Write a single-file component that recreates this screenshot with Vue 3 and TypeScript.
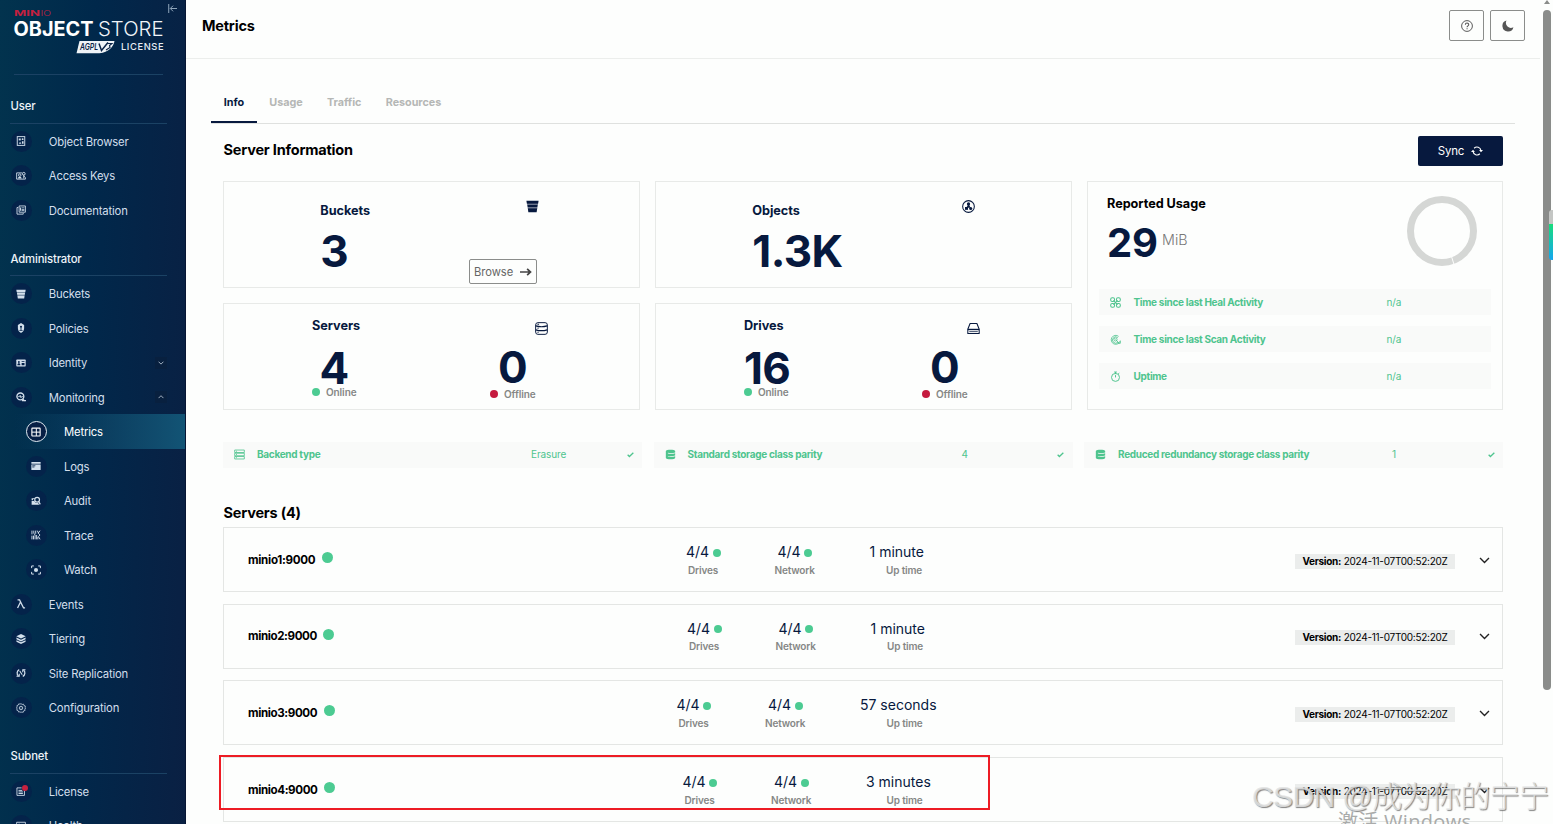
<script setup lang="ts">
interface NavItem {
  label: string
  icon: string
  sub?: boolean
  active?: boolean
  chevron?: 'up' | 'down'
  badge?: boolean
}
interface NavGroup {
  title: string
  items: NavItem[]
}

const groups: NavGroup[] = [
  {
    title: 'User',
    items: [
      { label: 'Object Browser', icon: 'browser' },
      { label: 'Access Keys', icon: 'keys' },
      { label: 'Documentation', icon: 'docs' },
    ],
  },
  {
    title: 'Administrator',
    items: [
      { label: 'Buckets', icon: 'bucket' },
      { label: 'Policies', icon: 'policy' },
      { label: 'Identity', icon: 'identity', chevron: 'down' },
      { label: 'Monitoring', icon: 'monitor', chevron: 'up' },
      { label: 'Metrics', icon: 'metrics', sub: true, active: true },
      { label: 'Logs', icon: 'logs', sub: true },
      { label: 'Audit', icon: 'audit', sub: true },
      { label: 'Trace', icon: 'trace', sub: true },
      { label: 'Watch', icon: 'watch', sub: true },
      { label: 'Events', icon: 'lambda' },
      { label: 'Tiering', icon: 'tiers' },
      { label: 'Site Replication', icon: 'replication' },
      { label: 'Configuration', icon: 'gear' },
    ],
  },
  {
    title: 'Subnet',
    items: [
      { label: 'License', icon: 'license', badge: true },
      { label: 'Health', icon: 'health' },
    ],
  },
]

const s = 'fill="none" stroke="currentColor"'
const icons: Record<string, string> = {
  browser: `<rect x="2" y="1" width="12" height="14" ${s} stroke-width="1.5"/><rect x="4.4" y="4" width="3.2" height="3"/><circle cx="10.6" cy="5" r="1.5"/><path d="M4.5 12.5l2-3.5 2 3.5zM9.5 8.5h2.6v4H9.5z"/>`,
  keys: `<path d="M9.5 3H1v10h14v-3" ${s} stroke-width="1.4"/><circle cx="6" cy="6.6" r="2" ${s} stroke-width="1.4"/><path d="M3 12c0-4 6-4 6 0z"/><circle cx="12.4" cy="4.4" r="2.2" ${s} stroke-width="1.5"/><path d="M12.4 6v6M12.4 9h2" ${s} stroke-width="1.4"/>`,
  docs: `<path d="M5 1.500h10v10H5z" ${s} stroke-width="1.4"/><path d="M3.500 4H1.600v10.600h10V13" ${s} stroke-width="1.4"/><path d="M6.500 4h1.600v5H6.500zM9 4h4.400v1.300H9zM9 6.200h4.400v1.300H9zM9 8.400h4.400v1.300H9z"/>`,
  bucket: `<path d="M.5 1h15l-.6 3.600H1.100zM1.500 5.800h13l-.5 3.200h-12zM2.200 10.200h11.600L13.100 15H2.900z"/><path d="M1.300 4h13.400v2.200H1.500zM2 8.500h12v2H2.200z" opacity=".45"/>`,
  policy: `<path d="M8 0l5 3v3.500c0 4-.2 7-5 9.500-4.800-2.500-5-5.500-5-9.500V3z"/><circle cx="8" cy="6" r="1.700" fill="#03204a"/><path d="M7.300 7h1.400v4.500H7.300zM5.500 11h5v1.200h-5z" fill="#03204a"/>`,
  identity: `<rect x=".5" y="2.500" width="15" height="11" rx="1"/><circle cx="4.600" cy="6.300" r="1.500" fill="#03204a"/><path d="M2.200 11.500c0-4 4.800-4 4.800 0zM9 5h4.600v1.500H9zM9 8h4.600v3.500H9z" fill="#03204a"/>`,
  monitor: `<circle cx="7" cy="7" r="5.500" ${s} stroke-width="2.200"/><path d="M3.500 7.400h2l1.200-2 1.300 3.800 1-1.800h2" ${s} stroke-width="1.500"/><path d="M10.500 11l3.600 3.600M9.500 13.800h6.500" ${s} stroke-width="2.200"/>`,
  metrics: `<rect x="1.400" y="1.800" width="13.200" height="12.600" rx=".8" ${s} stroke-width="1.800"/><path d="M8.500 2v12.300M1.400 8.200h13.200" ${s} stroke-width="1.600"/>`,
  logs: `<path d="M.6 1.500h14.800v3H.6zM.6 5.600h14.800v8.900H.6z"/><path d="M2 7.600h5M2 9.600h3.500" stroke="#03204a" stroke-width="1.200"/>`,
  audit: `<path d="M1 3.500h5v1.300H3.400v2H1zM1 8h4.200l2.500 3.200h3.800L13 14H1z"/><circle cx="9.800" cy="6" r="3.800" ${s} stroke-width="1.900"/><path d="M12.400 8.800l2.400 4.600" ${s} stroke-width="2"/>`,
  trace: `<path d="M1.500 1v6M1.500 9v6M4.500 1v4l2 3v7M4 9v6M7.500 1v5M9 8v7M10 1l2 4M14.500 1l-3 4 3 3-2.500 2.500 2.500 4.500M11 11v4" ${s} stroke-width="1.500"/>`,
  watch: `<path d="M1 5V1.500h3.500M11.500 1.500H15V5M15 11v3.500h-3.500M4.500 14.500H1V11" ${s} stroke-width="1.600"/><circle cx="8" cy="8" r="3.300"/>`,
  lambda: `<path d="M2.500 1.500h3.200L12 14h2.500M7 5.200L2.500 14.500" ${s} stroke-width="2"/>`,
  tiers: `<path d="M8 0l7.500 3.600L8 7.200.5 3.600z"/><path d="M.7 5.600L8 9.100l7.300-3.500v2.900L8 12 .7 8.500z"/><path d="M.7 9.800L8 13.300l7.300-3.500v2.600L8 15.900.7 12.400z"/>`,
  replication: `<path d="M5.200 2.600A6.300 6.300 0 0 0 4 13M10.800 13.400A6.300 6.300 0 0 0 12 3" ${s} stroke-width="2"/><path d="M.8 13.300h4.400V9.300M15.200 2.700h-4.400v4M6 4.800l4 6" ${s} stroke-width="1.700"/>`,
  gear: `<path d="M8 .9l1.700 1.500 2.300-.5.700 2.200 2.300.8-.5 2.200L15.500 8 14 9.700l.5 2.200-2.300.7-.7 2.300-2.200-.5L8 15.300l-1.600-1.300-2.200.5-.7-2.200-2.200-.8.500-2.200L.6 8l1.300-1.600-.5-2.200 2.200-.8.800-2.100 2.100.5z" ${s} stroke-width="1.200"/><circle cx="8" cy="8" r="2.800" ${s} stroke-width="1.300"/><circle cx="8" cy="8" r=".8"/>`,
  license: `<path d="M9 3H1.500v12h12V7.500" ${s} stroke-width="1.4"/><path d="M4 7h6M4 9.500h7M4 12h7" ${s} stroke-width="1.5"/>`,
  health: `<path d="M1 2h14v13H1z" ${s} stroke-width="1.4"/><path d="M4 5h2v2H4zM8 5.500h5M4 9h2v2H4zM8 10h5" ${s} stroke-width="1.2"/>`,
  objects: `<circle cx="8" cy="8" r="7.200" ${s} stroke-width="1.300"/><circle cx="8" cy="4.800" r="2"/><path d="M8 4.500l2.600 5H5.400z"/><rect x="3.700" y="8.600" width="3.700" height="3.500"/><circle cx="10.700" cy="10.400" r="1.900"/>`,
  server: `<rect x=".8" y=".8" width="14.400" height="14.400" rx="2.800" ${s} stroke-width="1.200"/><path d="M1 4.800c4 1.200 10 1.200 14 0M1 9.600c4 1.300 10 1.300 14 0" ${s} stroke-width="1.500"/><path d="M3 2.800h2M3 7.600h1.500M3 12.600h1.500" ${s} stroke-width="1.200"/>`,
  drive: `<path d="M3.800 1.800h8.400L15 9v5.200H1V9z" ${s} stroke-width="1.300" stroke-linejoin="round"/><path d="M1 9.200h14" ${s} stroke-width="1.700"/><path d="M2.800 11.800h10.500" ${s} stroke-width=".9"/>`,
  heal: `<g ${s} stroke-width="1.500"><rect x="1" y="1" width="5.600" height="5.600" rx="2.200"/><rect x="9.400" y="1" width="5.600" height="5.600" rx="2.200"/><rect x="1" y="9.400" width="5.600" height="5.600" rx="2.200"/><rect x="9.400" y="9.400" width="5.600" height="5.600" rx="2.200"/><path d="M5 5l6 6M11 5l-6 6"/></g>`,
  scan: `<g ${s} stroke-width="1.200"><path d="M14.500 10.500A6.500 6.500 0 1 1 12.500 3.500M11.500 12A4.600 4.600 0 1 1 11.300 5.300"/><circle cx="8" cy="8" r="2.300"/><path d="M8 8l5.500 5.500M15 9.500v4h-4"/></g>`,
  clock: `<circle cx="8" cy="9.300" r="5.800" ${s} stroke-width="1.400"/><path d="M6 1.500h4M8 1.500v3M12 4l1.500-1M8 9.300V6" ${s} stroke-width="1.400"/>`,
  backend: `<path d="M1 1.500h14v3.600H1zM1 6.200h14v3.600H1zM1 10.900h14v3.600H1z" ${s} stroke-width="1.200"/><path d="M3 3.300h1.400M3 8h1.400M3 12.700h1.400" stroke="currentColor" stroke-width="1.200"/>`,
  storage: `<path d="M1.200 3C1.200.4 14.800.4 14.800 3v2.200c-3 1.200-8 1.200-10.600.4v1c3 .8 7.700.6 10.600-.3v3.300c-3 1.200-8 1.200-10.600.4v1c3 .8 7.700.6 10.600-.3V13c0 2.600-13.600 2.600-13.600 0z"/>`,
  help: `<circle cx="8" cy="8" r="7.200" ${s} stroke-width="1.300"/><path d="M5.800 6.400c0-3 4.500-3 4.500-.2 0 1.700-2.200 1.700-2.200 3.500M8.100 10.900v1.500" ${s} stroke-width="1.400"/>`,
  moon: `<path d="M6 .8a6.600 6.600 0 0 0 9.200 8.700A7.400 7.400 0 1 1 6 .8z"/>`,
  sync: `<path d="M4.200 4.300a5.400 5.400 0 0 1 9.100 3.200M11.800 11.700a5.400 5.400 0 0 1-9.100-3.200" ${s} stroke-width="1.500"/><path d="M0 9.200h5.200L2.700 6.200zM16 6.800h-5.200l2.500 3z"/>`,
  arrow: `<path d="M0 8h14M9.500 3.800L14 8l-4.500 4.200" ${s} stroke-width="2.300"/>`,
  check: `<path d="M1.500 8.500l4 4L14.500 4" ${s} stroke-width="3"/>`,
  down: `<path d="M1.500 4.500L8 11l6.500-6.500" ${s} stroke-width="2"/>`,
  up: `<path d="M1.500 11L8 4.500l6.500 6.500" ${s} stroke-width="2"/>`,
  collapse: `<path d="M1.300 0v16M16 8H4.500M9 3L4 8l5 5" ${s} stroke-width="1.600"/>`,
}

const tabs = ['Info', 'Usage', 'Traffic', 'Resources']
const activity = [
  { label: 'Time since last Heal Activity', icon: 'heal', value: 'n/a' },
  { label: 'Time since last Scan Activity', icon: 'scan', value: 'n/a' },
  { label: 'Uptime', icon: 'clock', value: 'n/a' },
]
const backend = [
  { label: 'Backend type', icon: 'backend', value: 'Erasure' },
  { label: 'Standard storage class parity', icon: 'storage', value: '4' },
  { label: 'Reduced redundancy storage class parity', icon: 'storage', value: '1' },
]
const hosts = [
  { title: 'Servers', icon: 'server', online: '4', offline: '0' },
  { title: 'Drives', icon: 'drive', online: '16', offline: '0' },
]
const servers = [
  { name: 'minio1:9000', up: '1 minute' },
  { name: 'minio2:9000', up: '1 minute' },
  { name: 'minio3:9000', up: '57 seconds' },
  { name: 'minio4:9000', up: '3 minutes' },
]
</script>

<template>
  <div class="app">
    <aside class="sidebar">
      <div class="brand">
        <svg width="186" height="60" viewBox="0 0 186 60">
          <text x="14" y="15.800" class="minio" textLength="26" lengthAdjust="spacingAndGlyphs">MIN</text>
          <text x="40.500" y="15.800" class="minio thin" textLength="10.500" lengthAdjust="spacingAndGlyphs">IO</text>
          <text x="13.500" y="36" class="object" textLength="80" lengthAdjust="spacingAndGlyphs">OBJECT</text>
          <text x="98" y="36" class="store" textLength="65.500" lengthAdjust="spacingAndGlyphs">STORE</text>
          <path d="M79.500 41h35c-1 6-6 11.500-15 12.200H76.500z" fill="#eef3f7" />
          <text x="80" y="50" class="agpl" textLength="18" lengthAdjust="spacingAndGlyphs">AGPL</text>
          <path d="M99 43.500l2.500 7 6.500-8" fill="none" stroke="#0a2448" stroke-width="1.500" />
          <path d="M107 43.500h5l-2.500 2 .5 2-4 2.500" fill="none" stroke="#0a2448" stroke-width="1.100" />
          <text x="121" y="50.200" class="license" textLength="42.500">LICENSE</text>
        </svg>
        <svg class="collapse" viewBox="0 0 16 16" v-html="icons.collapse"></svg>
      </div>
      <div class="brand-rule"></div>
      <section v-for="g in groups" :key="g.title" class="group">
        <div class="group-title">{{ g.title }}</div>
        <div v-for="n in g.items" :key="n.label" class="nav" :class="{ sub: n.sub, active: n.active }">
          <span class="bubble">
            <svg viewBox="0 0 16 16" v-html="icons[n.icon]"></svg>
            <i v-if="n.badge" class="badge"></i>
          </span>
          <span class="nav-label">{{ n.label }}</span>
          <span v-if="n.chevron" class="chev"><svg viewBox="0 0 16 16" v-html="icons[n.chevron]"></svg></span>
        </div>
      </section>
    </aside>

    <main class="main">
      <header class="topbar">
        <h1>Metrics</h1>
        <div class="tools">
          <button class="tool"><svg viewBox="0 0 16 16" v-html="icons.help"></svg></button>
          <button class="tool"><svg viewBox="0 0 16 16" v-html="icons.moon"></svg></button>
        </div>
      </header>

      <nav class="tabs">
        <span v-for="(t, i) in tabs" :key="t" class="tab" :class="{ on: i === 0 }">{{ t }}</span>
      </nav>

      <div class="content">
        <div class="heading">
          <h2>Server Information</h2>
          <button class="sync">Sync<svg viewBox="0 0 16 16" v-html="icons.sync"></svg></button>
        </div>

        <div class="grid">
          <div class="card count">
            <div class="left">
              <div class="title">Buckets</div>
              <div class="big">3</div>
            </div>
            <div class="right">
              <svg class="ico" viewBox="0 0 16 16" v-html="icons.bucket"></svg>
              <button class="browse">Browse<svg viewBox="0 0 16 16" v-html="icons.arrow"></svg></button>
            </div>
          </div>
          <div class="card count">
            <div class="left">
              <div class="title">Objects</div>
              <div class="big">1.3K</div>
            </div>
            <div class="right wide">
              <svg class="ico" viewBox="0 0 16 16" v-html="icons.objects"></svg>
            </div>
          </div>

          <div class="card usage">
            <div class="usage-top">
              <div>
                <div class="title black">Reported Usage</div>
                <div class="amount"><span class="num">29</span><span class="unit">MiB</span></div>
              </div>
              <svg class="ring" viewBox="0 0 70 70">
                <circle cx="35" cy="35" r="31.500" fill="none" stroke="#d5d7d5" stroke-width="7" />
                <path d="M44.500 60.500l2.500 8" stroke="#fdfefd" stroke-width="1" />
              </svg>
            </div>
            <div v-for="a in activity" :key="a.label" class="strip act">
              <svg viewBox="0 0 16 16" v-html="icons[a.icon]"></svg>
              <b>{{ a.label }}</b>
              <span>{{ a.value }}</span>
            </div>
          </div>

          <div v-for="h in hosts" :key="h.title" class="card host">
            <div class="left">
              <div class="title">{{ h.title }}</div>
              <div class="big" :class="{ inset: h.online.length === 1 }">{{ h.online }}</div>
              <div class="state"><i class="dot green"></i>Online</div>
            </div>
            <div class="right">
              <svg class="ico" viewBox="0 0 16 16" v-html="icons[h.icon]"></svg>
              <div class="big">{{ h.offline }}</div>
              <div class="state"><i class="dot red"></i>Offline</div>
            </div>
          </div>
        </div>

        <div class="backend">
          <div v-for="b in backend" :key="b.label" class="strip">
            <svg viewBox="0 0 16 16" v-html="icons[b.icon]"></svg>
            <b>{{ b.label }}</b>
            <span>{{ b.value }}</span>
            <svg class="tick" viewBox="0 0 16 16" v-html="icons.check"></svg>
          </div>
        </div>

        <h2 class="list-title">Servers (4)</h2>
        <div v-for="(v, i) in servers" :key="v.name" class="server" :class="'r' + i">
          <div class="name">{{ v.name }}<i class="dot green"></i></div>
          <div class="stat drives">
            <div class="line">4/4<i class="dot green"></i></div>
            <small>Drives</small>
          </div>
          <div class="stat network">
            <div class="line">4/4<i class="dot green"></i></div>
            <small>Network</small>
          </div>
          <div class="stat uptime">
            <div class="line">{{ v.up }}</div>
            <small>Up time</small>
          </div>
          <div class="tail">
            <div class="version"><b>Version:</b> 2024-11-07T00:52:20Z</div>
            <svg viewBox="0 0 16 16" v-html="icons.down"></svg>
          </div>
        </div>
      </div>
    </main>

    <div class="scroll">
      <div class="cap"></div>
      <div class="thumb"></div>
    </div>
    <div class="side-tab"></div>
    <div class="marker"></div>
    <div class="activate">激活 Windows</div>
    <div class="watermark">CSDN @成为你的宁宁</div>
  </div>
</template>

<style>
body {
  margin: 0;
  overflow: hidden;
}
</style>

<style scoped>
.app {
  position: relative;
  display: flex;
  width: 1553px;
  height: 824px;
  overflow: hidden;
  background: #fdfefd;
  font-family: Inter, "Liberation Sans", "Noto Sans CJK SC", sans-serif;
  color: #000;
}
.app * {
  box-sizing: border-box;
}
svg {
  display: block;
  flex: none;
  fill: currentColor;
}
h1,
h2 {
  margin: 0;
  font-weight: 700;
  letter-spacing: -0.200px;
}
button {
  font: inherit;
  padding: 0;
  background: none;
  display: flex;
  align-items: center;
}

/* sidebar */
.sidebar {
  flex: none;
  width: 186px;
  height: 824px;
  overflow: hidden;
  background: linear-gradient(92deg, #02334e 0%, #00284b 45%, #0a2043 100%);
  border-right: 1px solid #071634;
  color: #d3dfec;
}
.brand {
  position: relative;
  height: 73.700px;
}
.minio {
  font-size: 7.500px;
  font-weight: 700;
  fill: #c4203f;
}
.minio.thin {
  font-weight: 300;
}
.object {
  font-size: 19.500px;
  font-weight: 700;
  fill: #fff;
}
.store {
  font-size: 19.500px;
  font-weight: 300;
  fill: #f1f5f9;
}
.agpl {
  font-size: 9px;
  font-weight: 600;
  font-style: italic;
  fill: #0a2448;
}
.license {
  font-size: 9.300px;
  font-weight: 500;
  fill: #e6edf4;
}
.collapse {
  position: absolute;
  left: 168px;
  top: 4px;
  width: 9px;
  height: 9px;
  color: #9fb4c8;
}
.brand-rule {
  height: 1px;
  margin: 0 22px 0 14px;
  background: #1b4264;
}
.group-title {
  height: 49.100px;
  margin: 0 18px 0 10px;
  padding: 23.600px 0 0 0.500px;
  border-bottom: 1px solid #1b4264;
  font-size: 11.300px;
  letter-spacing: -0.150px;
  line-height: 17px;
  font-weight: 500;
  color: #eef4f9;
}
.nav {
  display: flex;
  align-items: center;
  height: 34.500px;
  padding-left: 10.500px;
  font-size: 11.300px;
  letter-spacing: -0.180px;
}
.nav-label {
  margin-top: 1px;
}
.nav.sub {
  padding-left: 25.700px;
}
.bubble {
  position: relative;
  width: 21px;
  height: 21px;
  margin-right: 17.300px;
  border-radius: 50%;
  background: #04234a;
  display: flex;
  align-items: center;
  justify-content: center;
}
.bubble svg {
  width: 10px;
  height: 10px;
}
.nav.active {
  background: linear-gradient(90deg, rgba(22, 98, 130, 0) 8%, #125475 100%);
  color: #fff;
}
.active .bubble {
  border: 1px solid #e4edf4;
  background: #071f45;
}
.badge {
  position: absolute;
  left: 11.500px;
  top: 4px;
  width: 6px;
  height: 6px;
  border-radius: 50%;
  background: #c7213f;
}
.chev {
  margin-left: auto;
  margin-right: 18px;
  width: 12px;
  height: 12px;
  background: #08203f;
  display: flex;
  align-items: center;
  justify-content: center;
}
.chev svg {
  width: 6px;
  height: 6px;
}

/* main area */
.main {
  width: 1354px;
  flex: none;
}
.topbar {
  height: 59px;
  border-bottom: 1px solid #eceeec;
  padding: 10px 15px 0 16px;
  display: flex;
  justify-content: space-between;
}
h1 {
  font-size: 14.500px;
  line-height: 32px;
}
.tools {
  display: flex;
  gap: 6px;
}
.tool {
  width: 35px;
  height: 31px;
  border: 1px solid #8b8d8b;
  border-radius: 2px;
  justify-content: center;
  color: #555;
}
.tool svg {
  width: 12px;
  height: 12px;
}
.tabs {
  display: flex;
  height: 42px;
  margin: 23px 25px 0;
  border-bottom: 1px solid #dfe1df;
  font-size: 10.800px;
  letter-spacing: -0.050px;
  font-weight: 700;
  color: #b5b7b5;
}
.tab {
  height: 41px;
  line-height: 41px;
  padding: 0 11.700px 0 12.800px;
}
.tab.on {
  padding-right: 12.500px;
  color: #07193e;
  border-bottom: 2px solid #07193e;
}
.content {
  padding: 12px 37px 0;
}
.heading {
  display: flex;
  justify-content: space-between;
  height: 45px;
}
h2 {
  font-size: 14.500px;
  line-height: 28px;
}
.heading h2 {
  padding-left: 0.500px;
}
.sync {
  width: 85px;
  height: 30px;
  justify-content: center;
  gap: 7px;
  border: 0;
  border-radius: 2px;
  background: #07193e;
  color: #fff;
  font-size: 11.500px;
  letter-spacing: -0.200px;
}
.sync svg {
  width: 12px;
  height: 12px;
}
.grid {
  display: grid;
  grid-template-columns: 417px 417px 416px;
  grid-template-rows: 107px 107px;
  gap: 15px;
}
.card {
  display: flex;
  border: 1px solid #e8eae8;
  color: #07193e;
}
.title {
  font-size: 12.700px;
  line-height: 16px;
  font-weight: 700;
  letter-spacing: -0.050px;
}
.black {
  color: #000;
}
.big {
  font-size: 44px;
  font-weight: 700;
  letter-spacing: -0.600px;
}
.count {
  padding-left: 96.300px;
}
.count .left {
  width: 148.700px;
  padding-top: 21px;
}
.count .big {
  margin-top: 10px;
  line-height: 44px;
}
.count .right {
  display: flex;
  flex-direction: column;
  width: 70px;
  padding-top: 18px;
}
.count .right.wide {
  width: 74px;
}
.ico {
  width: 13px;
  height: 13px;
}
.count .ico {
  align-self: flex-end;
}
.browse {
  width: 68px;
  height: 25px;
  margin-top: 46px;
  padding: 0 4px;
  justify-content: space-between;
  border: 1px solid #8b8d8b;
  border-radius: 2px;
  font-size: 11.200px;
  letter-spacing: -0.050px;
  color: #666;
}
.browse svg {
  width: 12px;
  height: 12px;
  color: #444;
}
.host {
  padding-left: 88px;
}
.host .left {
  width: 178px;
  padding-top: 13.500px;
}
.host .left .big {
  margin-top: 16px;
  line-height: 36px;
}
.host .big.inset {
  padding-left: 7.500px;
}
.host .right {
  padding-top: 18px;
}
.host .ico {
  margin-left: 45px;
}
.host .right .big {
  margin-top: 14px;
  margin-bottom: 2px;
  padding-left: 8px;
  line-height: 36px;
}
.state {
  display: flex;
  align-items: center;
  gap: 6px;
  height: 13px;
  font-size: 10px;
  font-weight: 600;
  letter-spacing: -0.100px;
  color: #858785;
}
.dot {
  flex: none;
  width: 8px;
  height: 8px;
  border-radius: 50%;
}
.green {
  background: #4ccb92;
}
.red {
  background: #c51b3f;
}
.usage {
  grid-row: 1 / 3;
  grid-column: 3;
  flex-direction: column;
  padding: 14px 11px 0;
}
.usage-top {
  display: flex;
  justify-content: space-between;
  height: 93px;
  padding: 0 14px 0 8px;
}
.amount {
  display: flex;
  margin-top: 10px;
  font-size: 40px;
  line-height: 41px;
  font-weight: 700;
  letter-spacing: -0.300px;
}
.unit {
  margin-left: 4.500px;
  font-size: 14.300px;
  line-height: 35px;
  font-weight: 300;
  letter-spacing: 0;
  color: #777;
}
.ring {
  width: 70px;
  height: 70px;
}
.strip {
  display: flex;
  align-items: center;
  height: 26px;
  padding-left: 11px;
  background: #f9faf9;
  color: #4ec48e;
  font-size: 10px;
}
.strip svg {
  width: 11px;
  height: 11px;
  margin-right: 12px;
}
.strip b {
  width: 274px;
  margin-top: -1px;
  font-weight: 700;
  letter-spacing: -0.300px;
}
.strip span {
  margin-top: -1px;
  letter-spacing: -0.100px;
}
.act {
  margin-bottom: 11px;
}
.act svg {
  margin-right: 12.500px;
}
.act b {
  width: 253px;
}
.backend {
  display: grid;
  grid-template-columns: 419px 419px 419px;
  gap: 11.500px;
  margin-top: 31.500px;
}
.backend .tick {
  width: 7px;
  height: 7px;
  margin: 0 8.500px 0 auto;
}
.list-title {
  margin-top: 31.500px;
  padding-left: 0.500px;
  height: 28px;
}
.server {
  display: flex;
  position: relative;
  height: 65px;
  margin-bottom: 11.700px;
  border: 1px solid #e4e6e4;
}
.name {
  display: flex;
  align-items: center;
  width: 462px;
  height: 63px;
  padding-left: 24px;
  font-size: 11.600px;
  font-weight: 700;
  letter-spacing: -0.300px;
}
.name .dot {
  width: 11px;
  height: 11px;
  margin: -4px 0 0 6.500px;
}
.stat {
  padding-top: 14.500px;
  width: 91.500px;
}
.line {
  display: flex;
  align-items: center;
  gap: 3.500px;
  height: 18px;
  font-size: 14px;
  white-space: nowrap;
  color: #07193e;
}
.line .dot {
  margin-top: 2px;
}
small {
  display: block;
  margin-top: 1px;
  font-size: 10px;
  line-height: 17px;
  font-weight: 600;
  letter-spacing: -0.150px;
  color: #858785;
}
.drives small {
  padding-left: 2px;
}
.network small {
  margin-left: -3px;
}
.uptime .line {
  padding-left: 0.500px;
}
.uptime small {
  padding-left: 17px;
}
.r1 .name {
  width: 463px;
}
.r1 .name,
.r2 .name,
.r3 .name {
  letter-spacing: -0.400px;
}
.r2 .name {
  width: 452.500px;
}
.r2 .uptime small {
  padding-left: 27px;
}
.r3 .name {
  width: 458.500px;
}
.r3 .uptime small {
  padding-left: 21px;
}
.tail {
  display: flex;
  align-items: center;
  margin-left: auto;
  padding-right: 12px;
  height: 64px;
}
.version {
  width: 160px;
  height: 15px;
  margin: 2px 24px 0 0;
  line-height: 15px;
  text-align: center;
  white-space: nowrap;
  background: #ebedec;
  font-size: 10px;
  letter-spacing: -0.270px;
}
.tail svg {
  width: 11px;
  height: 11px;
  color: #222;
}

/* overlays */
.scroll {
  position: absolute;
  right: 2px;
  top: 0;
  width: 8px;
}
.cap {
  width: 0;
  margin: 0 auto 6px;
  border: 3px solid transparent;
  border-top: 0;
  border-bottom: 4px solid #8a8c8a;
}
.thumb {
  height: 680px;
  border-radius: 4px;
  background: #8a8c8a;
}
.side-tab {
  position: absolute;
  right: 0;
  top: 210px;
  width: 4px;
  height: 50px;
  border-radius: 3px 0 0 3px;
  background: linear-gradient(180deg, #c4c6c4 0 14px, #18dc7c 14px, #14a6f0 100%);
}
.marker {
  position: absolute;
  left: 219px;
  top: 755px;
  width: 771px;
  height: 55px;
  border: 2px solid #ed1c24;
}
.activate {
  position: absolute;
  left: 1338px;
  top: 807px;
  font-size: 20px;
  letter-spacing: 0.300px;
  line-height: 30px;
  font-family: "Open Sans", "Noto Sans CJK SC", sans-serif;
  white-space: nowrap;
  color: #a9abaa;
}
.watermark {
  position: absolute;
  left: 1252px;
  top: 776px;
  font-size: 30px;
  letter-spacing: -0.600px;
  line-height: 42px;
  font-family: "Liberation Sans", "Noto Sans CJK SC", sans-serif;
  font-weight: 300;
  white-space: nowrap;
  color: rgba(226, 227, 227, 0.850);
  text-shadow: 1px 1px 1px rgba(90, 90, 90, 0.750);
}
</style>
